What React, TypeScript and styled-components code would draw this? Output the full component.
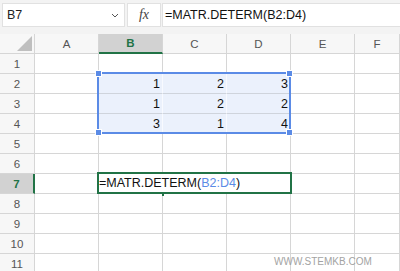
import styled, { createGlobalStyle } from 'styled-components';

const GlobalStyle = createGlobalStyle`
  html, body {
    margin: 0;
    padding: 0;
    background: #ffffff;
  }
  body {
    font-family: "Liberation Sans", Arial, sans-serif;
  }
`;

const GREEN = '#217346';
const BLUE = '#5b8be6';
const GRID = '#d6d6d6';

const COLS = ['A', 'B', 'C', 'D', 'E', 'F'];
const ROWS = [1, 2, 3, 4, 5, 6, 7, 8, 9, 10, 11];

const DATA: Record<string, number> = {
    B2: 1, C2: 2, D2: 3,
    B3: 1, C3: 2, D3: 2,
    B4: 3, C4: 1, D4: 4,
};

const isInRange = (col: number, row: number) => col >= 2 && col <= 4 && row >= 2 && row <= 4;

function App() {
    return <Window>
        <GlobalStyle />
        <Toolbar>
            <NameBox>
                <span>B7</span>
                <svg width="8" height="5" viewBox="0 0 8 5">
                    <polyline points="1,1 4,4 7,1" fill="none" stroke="#555" strokeWidth="1" />
                </svg>
            </NameBox>
            <FxBox>fx</FxBox>
            <FormulaBar>=MATR.DETERM(B2:D4)</FormulaBar>
        </Toolbar>
        <Sheet>
            <Corner $row={1} $col={1}>
                <svg width="15" height="15" viewBox="0 0 15 15">
                    <polygon points="15,0 15,15 0,15" fill="#bfbfbf" />
                </svg>
            </Corner>
            {COLS.map((c, i) => (
                <ColHeader key={c} $row={1} $col={i + 2} $active={c === 'B'}>{c}</ColHeader>
            ))}
            {ROWS.map((r) => (
                <RowHeader key={r} $row={r + 1} $col={1} $active={r === 7}>{r}</RowHeader>
            ))}
            {ROWS.map((r) => COLS.map((c, i) => {
                if (r === 7 && i >= 1 && i <= 3) return null;
                const value = DATA[c + r];
                return <Cell key={c + r} $row={r + 1} $col={i + 2} $selected={isInRange(i + 1, r)}>
                    {value}
                </Cell>;
            }))}
            <Selection>
                <Handle $top $left />
                <Handle $top />
                <Handle $left />
                <Handle />
            </Selection>
            <EditCell>
                =MATR.DETERM(<RefText>B2:D4</RefText>)
                <FillTick />
            </EditCell>
            <Watermark>WWW.STEMKB.COM</Watermark>
        </Sheet>
    </Window>;
}

const Window = styled.div`
  width: 400px;
  height: 271px;
  overflow: hidden;
  background: #ffffff;
  display: flex;
  flex-direction: column;
`

const Toolbar = styled.div`
  height: 34px;
  flex: 0 0 34px;
  box-sizing: border-box;
  background: #f3f3f3;
  display: flex;
  align-items: flex-start;
  padding: 3px 0 0 2px;
`

const Box = styled.div`
  height: 24px;
  box-sizing: border-box;
  background: #ffffff;
  border: 1px solid #e1e1e1;
  display: flex;
  align-items: center;
`

const NameBox = styled(Box)`
  width: 123px;
  padding: 0 5px 0 4px;
  justify-content: space-between;
  font-size: 12.5px;
  color: #222;
`

const FxBox = styled(Box)`
  width: 34px;
  margin-left: 2px;
  justify-content: center;
  font-family: "Liberation Serif", serif;
  font-style: italic;
  font-size: 14px;
  color: #444;
`

const FormulaBar = styled(Box)`
  flex: 1;
  margin-left: 1px;
  margin-right: -2px;
  padding-left: 2px;
  font-size: 12.5px;
  color: #111;
`

const Sheet = styled.div`
  position: relative;
  display: grid;
  grid-template-columns: 35px repeat(5, 64px) 1fr;
  grid-template-rows: repeat(12, 20px);
  font-size: 12.5px;
`

const Placed = styled.div<{ $row: number; $col: number }>`
  grid-row: ${(p) => p.$row};
  grid-column: ${(p) => p.$col};
  box-sizing: border-box;
  border-right: 1px solid ${GRID};
  border-bottom: 1px solid ${GRID};
`

const Corner = styled(Placed)`
  background: #f7f7f7;
  display: flex;
  align-items: flex-end;
  justify-content: flex-end;
  padding: 0 2px 2px 0;
`

const ColHeader = styled(Placed)<{ $active?: boolean }>`
  background: ${(p) => (p.$active ? '#d2d2d2' : '#f7f7f7')};
  border-bottom: ${(p) => (p.$active ? `2px solid ${GREEN}` : `1px solid ${GRID}`)};
  color: ${(p) => (p.$active ? GREEN : '#555')};
  font-weight: ${(p) => (p.$active ? 'bold' : 'normal')};
  font-size: 11.5px;
  display: flex;
  align-items: center;
  justify-content: center;
`

const RowHeader = styled(Placed)<{ $active?: boolean }>`
  background: ${(p) => (p.$active ? '#d2d2d2' : '#f7f7f7')};
  border-right: ${(p) => (p.$active ? `2px solid ${GREEN}` : `1px solid ${GRID}`)};
  color: ${(p) => (p.$active ? GREEN : '#555')};
  font-weight: ${(p) => (p.$active ? 'bold' : 'normal')};
  font-size: 11.5px;
  display: flex;
  align-items: center;
  justify-content: center;
`

const Cell = styled(Placed)<{ $selected?: boolean }>`
  background: ${(p) => (p.$selected ? '#ebf1fc' : '#ffffff')};
  border-right-color: ${(p) => (p.$selected ? '#f8faff' : GRID)};
  border-bottom-color: ${(p) => (p.$selected ? '#cfd4dc' : GRID)};
  color: #111;
  display: flex;
  align-items: center;
  justify-content: flex-end;
  padding-right: 2px;
`

const Selection = styled.div`
  grid-row: 3 / span 3;
  grid-column: 3 / span 3;
  margin: -2px 0 0 -2px;
  border: 2px solid ${BLUE};
  position: relative;
  z-index: 1;
  pointer-events: none;
`

const Handle = styled.div<{ $top?: boolean; $left?: boolean }>`
  position: absolute;
  width: 5px;
  height: 5px;
  background: ${BLUE};
  border: 1px solid #ffffff;
  box-sizing: content-box;
  ${(p) => (p.$top ? 'top: -4px;' : 'bottom: -4px;')}
  ${(p) => (p.$left ? 'left: -4px;' : 'right: -4px;')}
`

const EditCell = styled.div`
  grid-row: 8;
  grid-column: 3 / span 3;
  margin: -2px -1px 0 -2px;
  border: 2px solid ${GREEN};
  background: #ffffff;
  position: relative;
  z-index: 2;
  display: flex;
  align-items: center;
  white-space: pre;
  color: #111;
  font-size: 12.5px;
`

const RefText = styled.span`
  color: ${BLUE};
`

const FillTick = styled.div`
  position: absolute;
  left: 63px;
  bottom: -4px;
  width: 2px;
  height: 3px;
  background: ${GREEN};
`

const Watermark = styled.div`
  position: absolute;
  left: 274px;
  top: 222px;
  font-size: 10px;
  color: #a3a3a3;
  letter-spacing: 0;
  pointer-events: none;
`

export default App;
